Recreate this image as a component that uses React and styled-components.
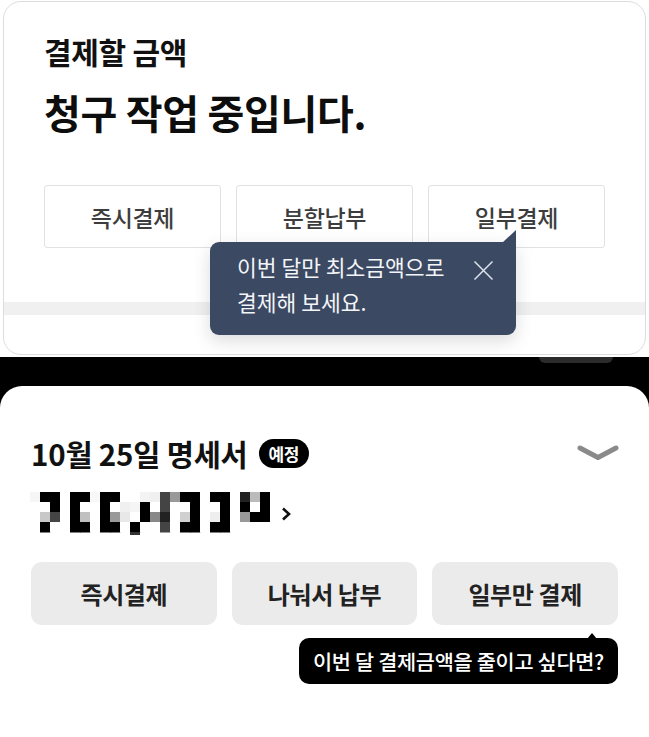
import React from "react";
import styled, { createGlobalStyle } from "styled-components";

const GlobalStyle = createGlobalStyle`
  * { box-sizing: border-box; }
  body {
    margin: 0;
    background: #fff;
    font-family: "Noto Sans CJK KR", "Noto Sans", sans-serif;
  }
`;

const Page = styled.div`
  width: 649px;
  min-height: 737px;
  background: #000;
  display: flex;
  flex-direction: column;
`;

const TopShot = styled.section`
  background: #fff;
  padding: 1px 3px 2px;
`;

const Card = styled.div`
  position: relative;
  height: 354px;
  border: 1px solid #dcdde0;
  border-radius: 18px;
  background: #fff;
  padding-top: 29px;
  display: flex;
  flex-direction: column;
`;

const Label = styled.div`
  padding-left: 40px;
  font-size: 30px;
  line-height: 40px;
  font-weight: 700;
  color: #111;
  letter-spacing: -0.3px;
`;

const Title = styled.h1`
  margin: 16px 0 0;
  padding-left: 40px;
  font-size: 40px;
  line-height: 50px;
  font-weight: 700;
  color: #0d0d0d;
  letter-spacing: -0.3px;
`;

const OptionRow = styled.div`
  display: grid;
  grid-template-columns: repeat(3, 1fr);
  gap: 15px;
  padding: 0 ${(p) => p.$side}px;
  margin-top: ${(p) => p.$top}px;
`;

const OutlineButton = styled.button`
  height: 63px;
  border: 1px solid #e1e2e4;
  border-radius: 3px;
  background: #fff;
  font-family: inherit;
  font-size: 23px;
  font-weight: 500;
  color: #3d3d3d;
  letter-spacing: -0.3px;
`;

const GrayBand = styled.div`
  margin-top: 54px;
  height: 13px;
  background: #f0f0f1;
`;

const Hint = styled.div`
  position: absolute;
  left: 206px;
  top: 240px;
  width: 306px;
  height: 93px;
  padding: 7px 22px 0 27px;
  background: #3b4963;
  border-radius: 9px 0 9px 9px;
  box-shadow: 0 6px 18px rgba(0, 0, 0, 0.14);
  display: flex;
  align-items: flex-start;
  justify-content: space-between;

  &::after {
    content: "";
    position: absolute;
    right: 0;
    top: -12px;
    width: 14px;
    height: 13px;
    background: #3b4963;
    clip-path: polygon(100% 0, 100% 100%, 0 100%);
  }
`;

const HintText = styled.p`
  margin: 0;
  font-size: 21.5px;
  line-height: 35px;
  color: #f4f5f8;
  white-space: nowrap;
`;

const CloseIcon = styled.svg`
  margin-top: 11px;
  flex: none;
`;

const Band = styled.div`
  height: 29px;
  display: flex;
  justify-content: flex-end;
  padding-right: 36px;
`;

const Peek = styled.div`
  width: 74px;
  height: 6px;
  background: #2b2b2b;
  border-radius: 0 0 14px 14px;
`;

const Sheet = styled.section`
  flex: 1;
  background: #fff;
  border-radius: 22px 22px 0 0;
  padding-top: 49px;
  display: flex;
  flex-direction: column;
`;

const SheetHeader = styled.div`
  display: flex;
  align-items: center;
  justify-content: space-between;
  padding: 0 30px 0 31px;
  height: 36px;
`;

const HeaderLeft = styled.div`
  display: flex;
  align-items: center;
  gap: 11px;
`;

const StatementTitle = styled.h2`
  margin: 0;
  font-size: 29.5px;
  line-height: 36px;
  font-weight: 700;
  color: #111;
  letter-spacing: -0.2px;
`;

const Badge = styled.span`
  height: 29px;
  padding: 0 10px;
  border-radius: 15px;
  background: #000;
  color: #fff;
  font-size: 17px;
  font-weight: 700;
  line-height: 29px;
  letter-spacing: -0.5px;
`;

const AmountRow = styled.div`
  display: flex;
  align-items: center;
  gap: 11px;
  padding-left: 30px;
  margin-top: 21px;
`;

const FilledButton = styled.button`
  height: 63px;
  border: none;
  border-radius: 11px;
  background: #ebebeb;
  font-family: inherit;
  font-size: 24px;
  font-weight: 700;
  color: #222;
  letter-spacing: -0.4px;
`;

const BubbleRow = styled.div`
  display: flex;
  justify-content: flex-end;
  padding-right: 31px;
  margin-top: 13px;
`;

const Bubble = styled.div`
  position: relative;
  width: 319px;
  height: 46px;
  border-radius: 10px;
  background: #000;
  color: #fff;
  font-size: 20.8px;
  font-weight: 500;
  line-height: 46px;
  text-align: center;
  letter-spacing: -0.3px;
  white-space: nowrap;

  &::before {
    content: "";
    position: absolute;
    right: 21px;
    top: -5px;
    width: 10px;
    height: 6px;
    background: #000;
    clip-path: polygon(50% 0, 100% 100%, 0 100%);
  }
`;

const W = "#fff", B = "#000";
const mosaic = [
  ["#f6f6f6", B, B, W, B, B, "#f8f8f8", B, B, W, W, "#f3f3f3", "#f0f0f0", "#444", "#999", B, B, W, B, B, W, "#222", "#bbb", B],
  [W, W, B, W, B, W, W, B, W, "#f0f0f0", "#f5f5f5", B, W, "#444", W, W, B, W, W, B, W, B, W, B],
  [W, "#c8c8c8", "#444", W, B, "#c0c0c0", W, B, "#999", "#e8e8e8", W, B, "#888", "#222", W, "#d0d0d0", B, W, "#eee", B, W, "#999", B, B],
  [W, B, W, W, B, B, W, B, B, W, B, W, W, "#444", W, B, B, W, B, B, W, W, W, W],
];

function Mosaic() {
  return (
    <svg width="240" height="44" viewBox="0 0 240 44">
      {mosaic.map((row, r) =>
        row.map((c, i) => (
          <rect key={r + "-" + i} x={i * 10} y={r * 10} width="10.5" height="10.5" fill={c} />
        ))
      )}
      <rect x="100" y="40" width="10" height="3" fill="#333" />
    </svg>
  );
}

const oldOptions = ["즉시결제", "분할납부", "일부결제"];
const newOptions = ["즉시결제", "나눠서 납부", "일부만 결제"];

export default function App() {
  return (
    <Page>
      <GlobalStyle />
      <TopShot>
        <Card>
          <Label>결제할 금액</Label>
          <Title>청구 작업 중입니다.</Title>
          <OptionRow $top={48} $side={40}>
            {oldOptions.map((o) => (
              <OutlineButton key={o}>{o}</OutlineButton>
            ))}
          </OptionRow>
          <GrayBand />
          <Hint>
            <HintText>
              이번 달만 최소금액으로
              <br />
              결제해 보세요.
            </HintText>
            <CloseIcon width="21" height="21" viewBox="0 0 21 21">
              <path d="M1.5 1.5 L19.5 19.5 M19.5 1.5 L1.5 19.5" stroke="#dfe3ea" strokeWidth="1.5" fill="none" />
            </CloseIcon>
          </Hint>
        </Card>
      </TopShot>
      <Band>
        <Peek />
      </Band>
      <Sheet>
        <SheetHeader>
          <HeaderLeft>
            <StatementTitle>10월 25일 명세서</StatementTitle>
            <Badge>예정</Badge>
          </HeaderLeft>
          <svg width="42" height="16" viewBox="0 0 42 16">
            <path d="M3 3 L21 12.5 L39 3" stroke="#8a8a8a" strokeWidth="5" strokeLinecap="round" strokeLinejoin="round" fill="none" />
          </svg>
        </SheetHeader>
        <AmountRow>
          <Mosaic />
          <svg width="10" height="14" viewBox="0 0 10 14">
            <path d="M2 1.5 L8 7 L2 12.5" stroke="#111" strokeWidth="2.6" fill="none" />
          </svg>
        </AmountRow>
        <OptionRow $top={26} $side={31}>
          {newOptions.map((o) => (
            <FilledButton key={o}>{o}</FilledButton>
          ))}
        </OptionRow>
        <BubbleRow>
          <Bubble>이번 달 결제금액을 줄이고 싶다면?</Bubble>
        </BubbleRow>
      </Sheet>
    </Page>
  );
}
